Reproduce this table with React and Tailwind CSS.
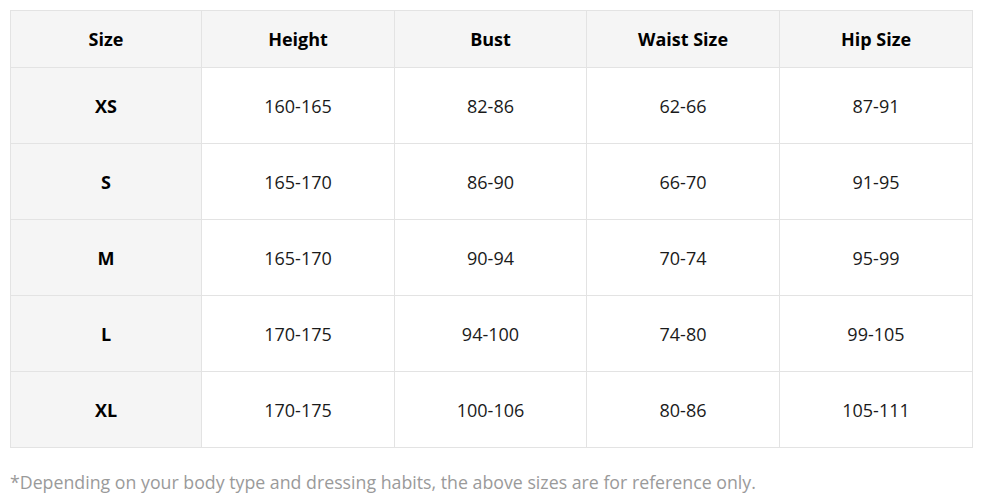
import React from 'react';

const headers = ['Size', 'Height', 'Bust', 'Waist Size', 'Hip Size'];

const rows = [
  ['XS', '160-165', '82-86', '62-66', '87-91'],
  ['S', '165-170', '86-90', '66-70', '91-95'],
  ['M', '165-170', '90-94', '70-74', '95-99'],
  ['L', '170-175', '94-100', '74-80', '99-105'],
  ['XL', '170-175', '100-106', '80-86', '105-111'],
];

export default function App() {
  return (
    <div className="w-[983px] h-[504px] bg-white pt-[10px] pl-[10px] text-[18px] text-[#1a1a1a] font-['Open_Sans',sans-serif]">
      <div className="w-[963px] grid grid-cols-[191px_193px_192px_193px_193px] border-t border-l border-[#e3e3e3]">
        {headers.map((h) => (
          <div
            key={h}
            className="h-[57px] flex items-center justify-center pt-[1px] bg-[#f5f5f5] border-r border-b border-[#e3e3e3] font-bold text-black"
          >
            {h}
          </div>
        ))}
        {rows.map((row) =>
          row.map((cell, i) => (
            <div
              key={row[0] + i}
              className={`h-[76px] flex items-center justify-center pt-[2px] border-r border-b border-[#e3e3e3] ${
                i === 0 ? 'bg-[#f5f5f5] font-bold text-black' : 'bg-white'
              }`}
            >
              {cell}
            </div>
          ))
        )}
      </div>
      <p className="mt-[20px] leading-[28px] text-[17.75px] text-[#9a9a9a]">
        *Depending on your body type and dressing habits, the above sizes are for reference only.
      </p>
    </div>
  );
}
